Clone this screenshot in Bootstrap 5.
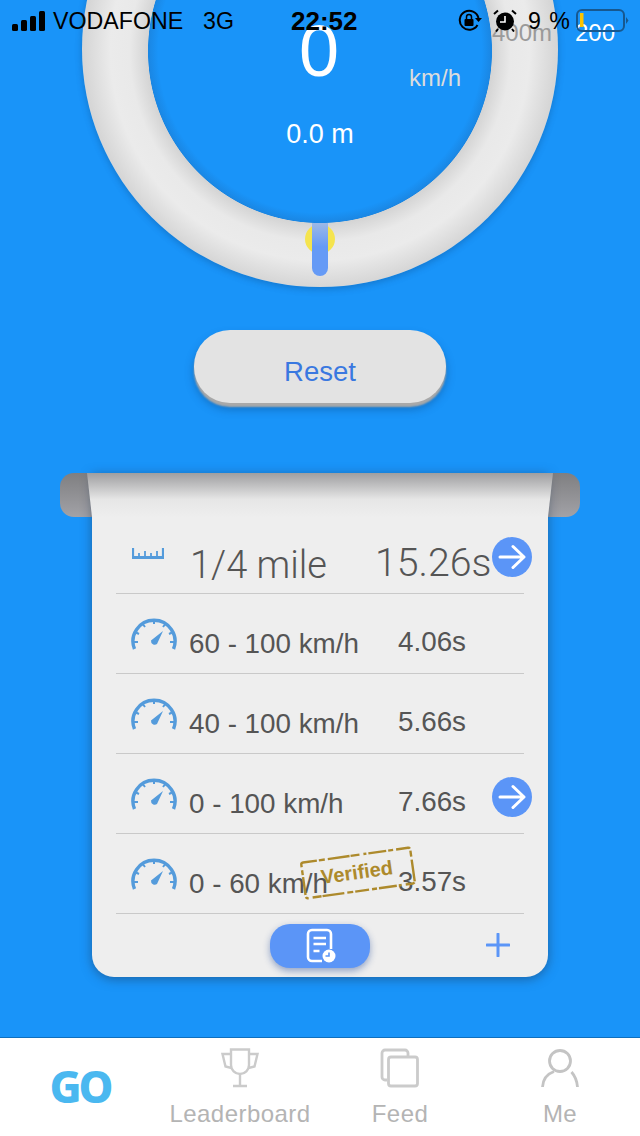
<!DOCTYPE html>
<html lang="en">
<head>
    <meta charset="UTF-8">
    <meta name="viewport" content="width=device-width, initial-scale=1.0">
    <title>GO</title>
    <link href="https://cdn.jsdelivr.net/npm/bootstrap@5.3.0/dist/css/bootstrap.min.css" rel="stylesheet">
    <style>
        html, body { height: 1136px; overflow: hidden; }
        body { background: #1994f9; font-family: "Liberation Sans", Arial, sans-serif; color: #555; }
        .status-bar { position: absolute; top: 0; left: 0; width: 640px; height: 40px; z-index: 5; color: #000; font-size: 23.2px; line-height: 42px; }
        .status-bar span, .status-bar svg { position: absolute; }
        .clock-text { font-size: 26px; }
        .gauge-area { position: relative; height: 330px; overflow: hidden; }
        .dial { position: absolute; left: 82px; top: -189px; width: 476px; height: 476px; border-radius: 50%;
            background: radial-gradient(circle 238px at 238px 240px, rgba(30,80,140,0) 68%, rgba(30,80,140,.2) 72.1%, #d4d4d4 72.4%, #e9e9e9 80%, #ebebeb 88%, #d6d6d6 99%);
            box-shadow: 0 2px 7px rgba(10,50,100,.3); }
        .dial-dot { position: absolute; left: 305px; top: 224px; width: 30px; height: 30px; border-radius: 50%; background: #f5e44e; }
        .dial-needle { position: absolute; left: 312px; top: 223px; width: 16px; height: 53px; border-radius: 0 0 8px 8px; background: linear-gradient(#9db9e6, #659af6 45%); }
        .dial-text { position: absolute; color: #fff; white-space: nowrap; line-height: 1; }
        .speed-num { left: 0; width: 638px; text-align: center; top: 15px; font-size: 72px; }
        .speed-unit { left: 409px; top: 66px; font-size: 24px; color: #dcdcdc; }
        .dist-num { left: 0; width: 640px; text-align: center; top: 121px; font-size: 27px; }
        .tick-a { left: 492px; top: 21px; font-size: 24px; color: #9a9a9a; }
        .tick-b { left: 575px; top: 21px; font-size: 24px; }
        .reset-btn { width: 252px; height: 73px; margin-bottom: 4px; border-radius: 36px; background: #e3e3e3; border: 0; color: #3a78e0; font-size: 27.5px; padding-top: 16px;
            box-shadow: 0 4px 2px #a9a9a9, 0 6px 10px rgba(0,40,90,.35); }
        .reset-btn:hover { background: #e3e3e3; color: #3a78e0; }
        .paper-wrap { position: relative; margin: 66px 60px 0; }
        .roller { position: absolute; left: 0; top: 0; right: 0; height: 44px; border-radius: 14px; background: linear-gradient(#7f7f81, #a2a2a7); }
        .paper { position: relative; margin: 0 32px; width: 456px; height: 504px; background: #eee; border-radius: 0 0 22px 22px; box-shadow: 0 2px 11px rgba(30,50,80,.5); }
        .paper-top { height: 44px; margin: 0 -5px; clip-path: polygon(0 0, 100% 0, calc(100% - 5px) 100%, 5px 100%); background: linear-gradient(#9e9ea0, #e6e6e6 60%, #eee); }
        .time-row { position: relative; height: 80px; margin: 0 24px; border-bottom: 1px solid #c9c9c9; }
        .row-first { height: 77px; }
        .row-icon { position: absolute; left: 15px; top: 22px; width: 46px; height: 35px; }
        .row-label { position: absolute; left: 73px; top: 36px; font-size: 27.8px; line-height: 1; white-space: nowrap; }
        .row-time { position: absolute; left: 282px; top: 34px; font-size: 27.8px; line-height: 1; }
        .row-first .row-label { left: 74px; top: 29px; font-size: 38px; font-family: Roboto, sans-serif; font-weight: 300; }
        .row-first .row-time { left: 259px; top: 27px; font-size: 39.3px; font-family: Roboto, sans-serif; font-weight: 300; }
        .row-first .row-icon { left: 16px; top: 31px; width: 32px; height: 11px; }
        .go-arrow { position: absolute; left: 376px; width: 40px; height: 40px; border-radius: 50%; background: #5b95f7; }
        .stamp { position: absolute; left: 183px; top: 12px; width: 118px; height: 54px; }
        .paper-foot { height: 62px; position: relative; }
        .log-btn { position: absolute; left: 178px; top: 10px; width: 100px; height: 44px; border-radius: 20px; background: #5b95f7; border: 0; padding: 0; box-shadow: 0 3px 7px rgba(30,70,150,.45); }
        .plus-btn { position: absolute; left: 394px; top: 19px; width: 24px; height: 24px; }
        .tab-bar { position: absolute; left: 0; top: 1037px; width: 640px; height: 99px; background: #fff; border-top: 1px solid #0f6fbd; }
        .tab-item { width: 160px; text-align: center; font-size: 24px; letter-spacing: .45px; line-height: 1; color: #b4b4b4; padding-top: 10px; }
        .tab-item svg { display: block; margin: 0 auto 14px; height: 40px; }
        .tab-go { font-family: "Noto Sans", sans-serif; font-weight: 800; font-size: 44px; letter-spacing: -3px; color: #4ab8f0; padding-top: 26px; }
    </style>
</head>
<body>
    <svg width="0" height="0" class="position-absolute">
        <symbol id="speedo" viewBox="0 0 46 35">
            <path d="M3.500 33 A21 21 0 1 1 42.500 33" fill="none" stroke="#549bdb" stroke-width="3.400"/>
            <path d="M23 3v5M11 7l3 4M35 7l-3 4M4 16l4 2M42 16l-4 2M2 26h5M44 26h-5" stroke="#549bdb" stroke-width="2" fill="none"/>
            <path d="M20 24.500 L32 15 L26 28 A3.800 3.800 0 0 1 20 24.500Z" fill="#549bdb"/>
        </symbol>
        <symbol id="arrow" viewBox="0 0 40 40">
            <path d="M8 20H31M21 9.500 32 20 21 30.500" fill="none" stroke="#fff" stroke-width="3" stroke-linecap="round" stroke-linejoin="round"/>
        </symbol>
    </svg>

    <div class="status-bar">
        <svg style="left:12px;top:11px" width="33" height="20" viewBox="0 0 33 20" fill="#000">
            <rect x="0" y="13" width="6" height="7" rx="1.500"/><rect x="9" y="9" width="6" height="11" rx="1.500"/><rect x="18" y="5" width="6" height="15" rx="1.500"/><rect x="27" y="0" width="6" height="20" rx="1.500"/>
        </svg>
        <span style="left:53px">VODAFONE</span>
        <span style="left:203px">3G</span>
        <span class="fw-bold clock-text" style="left:291px">22:52</span>
        <svg style="left:458px;top:9px" width="24" height="23" viewBox="0 0 24 23">
            <path d="M19.500 16A9.500 9.500 0 1 1 20.500 9" fill="none" stroke="#000" stroke-width="2"/>
            <path d="M17 9h7l-3.500 4z" fill="#000"/>
            <rect x="6.500" y="10" width="9" height="7" rx="1"/>
            <path d="M8.500 10V8a2.500 2.500 0 0 1 5 0v2" fill="none" stroke="#000" stroke-width="1.500"/>
        </svg>
        <svg style="left:493px;top:9px" width="24" height="23" viewBox="0 0 24 23">
            <circle cx="12" cy="12.500" r="9"/>
            <path d="M12 7v6H7" stroke="#fff" stroke-width="1.600" fill="none"/>
            <path d="M1 5 5 1.500M23 5 19 1.500M5 20l-2 2.500M19 20l2 2.500" stroke="#000" stroke-width="2"/>
        </svg>
        <span style="left:528px;word-spacing:2px">9 %</span>
        <svg style="left:576px;top:9px" width="54" height="24" viewBox="0 0 54 24">
            <rect x="1" y="1" width="47" height="21" rx="5" fill="none" stroke="#17588f" stroke-width="2"/>
            <rect x="4" y="4" width="3.500" height="14" fill="#fbc400"/>
            <path d="M50 8 52.500 11.500 50 15z" fill="#17588f"/>
        </svg>
    </div>

    <div class="gauge-area">
        <div class="dial"></div>
        <div class="dial-dot"></div>
        <div class="dial-needle"></div>
        <div class="dial-text speed-num">0</div>
        <div class="dial-text speed-unit">km/h</div>
        <div class="dial-text dist-num">0.0 m</div>
        <div class="dial-text tick-a">400m</div>
        <div class="dial-text tick-b">200</div>
    </div>

    <div class="d-flex justify-content-center">
        <button class="btn reset-btn" type="button">Reset</button>
    </div>

    <div class="paper-wrap">
        <div class="roller"></div>
        <div class="paper">
            <div class="paper-top"></div>

            <div class="time-row row-first">
                <svg class="row-icon" viewBox="0 0 32 11"><path d="M1 0v9.500h30V0" fill="none" stroke="#549bdb" stroke-width="2.200"/><path d="M0 9.500h32" stroke="#549bdb" stroke-width="3"/><path d="M7 5v4M13 3v6M19 5v4M25 3v6" stroke="#549bdb" stroke-width="1.800"/></svg>
                <div class="row-label">1/4 mile</div>
                <div class="row-time">15.26s</div>
                <div class="go-arrow" style="top:20px"><svg width="40" height="40"><use href="#arrow"/></svg></div>
            </div>
            <div class="time-row">
                <svg class="row-icon"><use href="#speedo"/></svg>
                <div class="row-label">60 - 100 km/h</div>
                <div class="row-time">4.06s</div>
            </div>
            <div class="time-row">
                <svg class="row-icon"><use href="#speedo"/></svg>
                <div class="row-label">40 - 100 km/h</div>
                <div class="row-time">5.66s</div>
            </div>
            <div class="time-row">
                <svg class="row-icon"><use href="#speedo"/></svg>
                <div class="row-label">0 - 100 km/h</div>
                <div class="row-time">7.66s</div>
                <div class="go-arrow" style="top:23px"><svg width="40" height="40"><use href="#arrow"/></svg></div>
            </div>
            <div class="time-row">
                <svg class="row-icon"><use href="#speedo"/></svg>
                <div class="row-label">0 - 60 km/h</div>
                <div class="row-time">3.57s</div>
                <svg class="stamp" viewBox="0 0 118 54">
                    <g transform="rotate(-8 59 27)">
                        <rect x="4" y="9" width="110" height="36" rx="2" fill="none" stroke="#ad8a2c" stroke-width="2.400" stroke-dasharray="14 2 6 3 22 1 9 4 3 2 18 2 5 3"/>
                        <text x="58" y="33" text-anchor="middle" font-family="Liberation Sans" font-weight="700" font-size="20" fill="#ad8a2c">Verified</text>
                    </g>
                </svg>
            </div>

            <div class="paper-foot">
                <button class="log-btn" type="button">
                    <svg width="32" height="36" viewBox="0 0 32 36">
                        <path d="M18 33H8a4 4 0 0 1-4-4V6a4 4 0 0 1 4-4h15a4 4 0 0 1 4 4v15" fill="none" stroke="#fff" stroke-width="2.600"/>
                        <path d="M9.500 10h12.500M9.500 16h12.500M9.500 23h6" stroke="#fff" stroke-width="2.600"/>
                        <circle cx="25" cy="28" r="6.500" fill="#fff"/>
                        <path d="M25 24.500V28h-3.500" fill="none" stroke="#5b95f7" stroke-width="1.600"/>
                    </svg>
                </button>
                <svg class="plus-btn" viewBox="0 0 24 24"><path d="M12 1v22M1 12h22" stroke="#5b95f7" stroke-width="3" stroke-linecap="round"/></svg>
            </div>
        </div>
    </div>

    <nav class="tab-bar d-flex">
        <div class="tab-item tab-go">GO</div>
        <div class="tab-item">
            <svg width="40" height="40" viewBox="0 0 40 40" fill="none" stroke="#cbcbcb" stroke-width="2.400">
                <path d="M11 1.500h18V17a9 9 0 0 1-18 0zM11 6H2.500l3 12.500 6 1.500M29 6h8.500l-3 12.500-6 1.500M20 26v11M13 38h14"/>
            </svg>
            Leaderboard
        </div>
        <div class="tab-item">
            <svg width="40" height="40" viewBox="0 0 40 40" fill="none" stroke="#cbcbcb" stroke-width="2.800">
                <path d="M7 32H5a3 3 0 0 1-3-3V5a3 3 0 0 1 3-3h20a3 3 0 0 1 3 3v3"/>
                <rect x="8.500" y="9" width="29" height="29" rx="2.500"/>
            </svg>
            Feed
        </div>
        <div class="tab-item">
            <svg width="40" height="40" viewBox="0 0 40 40" fill="none" stroke="#c4c4c4" stroke-width="2.800">
                <circle cx="20" cy="13" r="10.500"/>
                <path d="M2.500 39C3 31 7 26 14 23.500M37.500 39c-.5-7-2.500-11-6-15"/>
            </svg>
            Me
        </div>
    </nav>
</body>
</html>
